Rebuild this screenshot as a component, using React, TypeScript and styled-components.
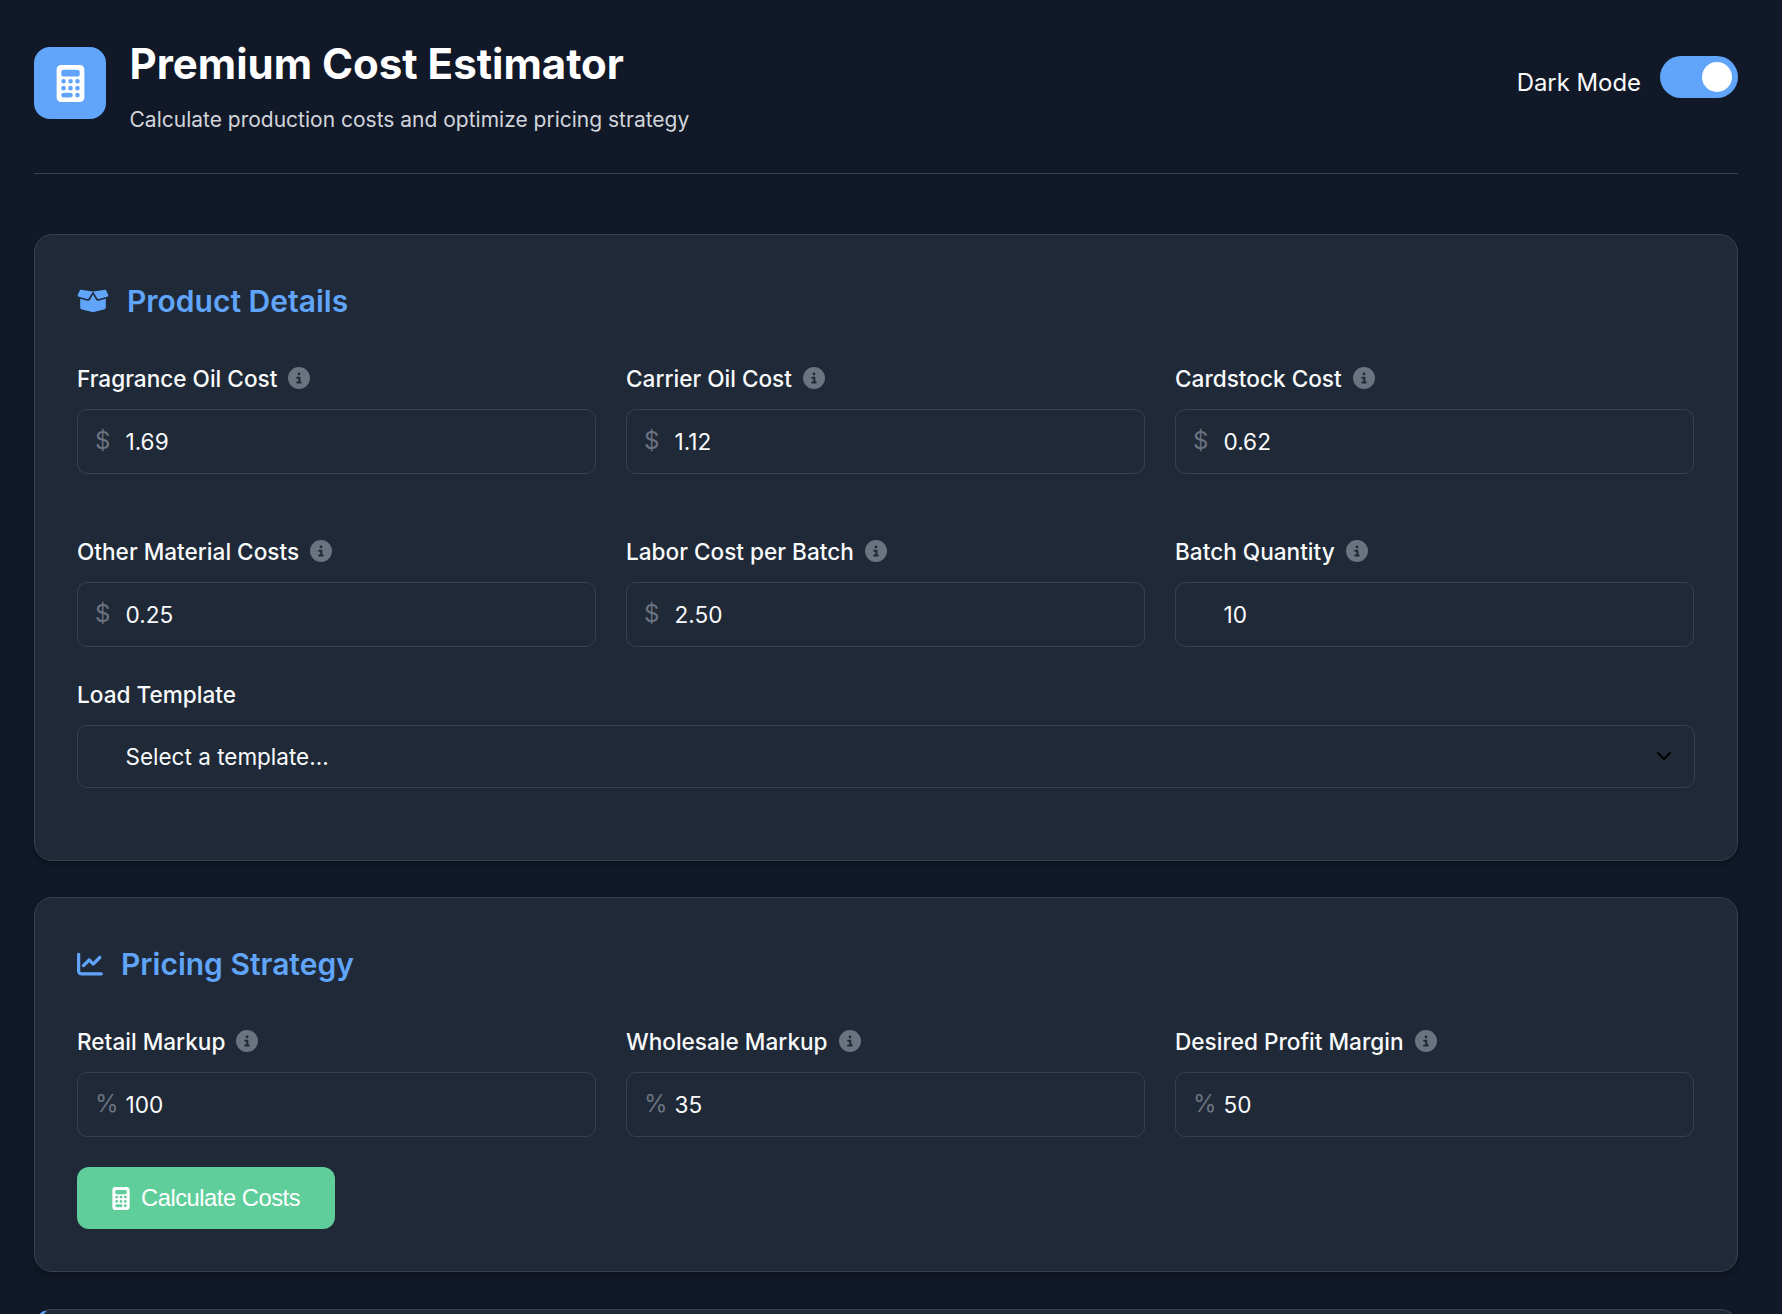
import styled, { createGlobalStyle } from 'styled-components';
import { FaBoxOpen, FaCalculator, FaChartLine, FaCircleInfo } from 'react-icons/fa6';
import { ChevronDown } from 'lucide-react';

const GlobalStyle = createGlobalStyle`
    html, body {
        margin: 0;
        padding: 0;
        background-color: #111827;
    }
    body {
        font-family: 'Inter', 'Liberation Sans', sans-serif;
        color: #f9fafb;
    }
    * {
        box-sizing: border-box;
    }
`;

const Page = styled.div`
    padding: 0 44px 0 34px;
    height: 1314px;
    overflow: hidden;
`;

const Header = styled.header`
    display: flex;
    justify-content: space-between;
    height: 174px;
    padding-top: 36px;
    border-bottom: 1px solid #374151;
    margin-bottom: 60px;
`;

const Brand = styled.div`
    display: flex;
    align-items: flex-start;
    gap: 23.5px;
`;

const LogoTile = styled.div`
    width: 72px;
    height: 72px;
    margin-top: 11px;
    border-radius: 16px;
    background-color: #60a5fa;
    display: flex;
    align-items: center;
    justify-content: center;
    color: #fff;
    font-size: 37px;
`;

const Title = styled.h1`
    margin: 0;
    font-size: 42px;
    line-height: 56px;
    font-weight: 700;
    color: #fff;
`;

const Subtitle = styled.p`
    margin: 14px 0 0;
    font-size: 21px;
    line-height: 28px;
    color: #d1d5db;
`;

const ThemeControl = styled.div`
    display: flex;
    align-items: flex-start;
    gap: 19px;
    padding-top: 20px;
`;

const ThemeLabel = styled.span`
    font-size: 23.9px;
    line-height: 54px;
    color: #f9fafb;
`;

const Switch = styled.div`
    width: 78px;
    height: 42px;
    padding: 6px;
    border-radius: 21px;
    background-color: #60a5fa;
    display: flex;
    justify-content: flex-end;
`;

const Knob = styled.span`
    width: 30px;
    height: 30px;
    border-radius: 50%;
    background-color: #fff;
`;

const Card = styled.section<{ $height: number; $accent?: boolean }>`
    height: ${(p) => p.$height}px;
    margin-bottom: 36.5px;
    padding: 42px;
    background-color: #1f2937;
    border: 1px solid #374151;
    border-left: ${(p) => (p.$accent ? '5px solid #60a5fa' : '1px solid #374151')};
    border-radius: 18px;
    box-shadow:
        0 4px 6px -1px rgba(0, 0, 0, 0.2),
        0 2px 4px -1px rgba(0, 0, 0, 0.14);
`;

const CardTitle = styled.h2<{ $gap: number; $iconSize: number }>`
    display: flex;
    align-items: center;
    gap: ${(p) => p.$gap}px;
    margin: 0 0 38px;
    font-size: 30px;
    line-height: 48px;
    font-weight: 600;
    color: #60a5fa;
    svg {
        font-size: ${(p) => p.$iconSize}px;
    }
`;

const FieldGrid = styled.div`
    display: grid;
    grid-template-columns: repeat(3, 519px);
    column-gap: 30px;
    row-gap: 62px;
`;

const Field = styled.div`
    display: flex;
    flex-direction: column;
`;

const Label = styled.label`
    display: flex;
    align-items: center;
    gap: 11px;
    height: 30px;
    margin-bottom: 16px;
    font-size: 22.6px;
    font-weight: 500;
    color: #f9fafb;
    svg {
        color: #6b7280;
        font-size: 22px;
    }
`;

const InputWrap = styled.div`
    position: relative;
`;

const Prefix = styled.span`
    position: absolute;
    left: 18px;
    top: 18px;
    font-size: 24px;
    line-height: 28px;
    color: #6b7280;
`;

const Input = styled.input`
    width: 100%;
    height: 65px;
    padding: 0 16px 0 47.5px;
    background-color: transparent;
    border: 1px solid #374151;
    border-radius: 10px;
    font-family: 'Inter', sans-serif;
    font-size: 22.6px;
    color: #f9fafb;
    outline: none;
`;

const Select = styled.select`
    width: 100%;
    height: 63px;
    padding: 0 47.5px;
    appearance: none;
    background-color: transparent;
    border: 1px solid #374151;
    border-radius: 10px;
    font-family: 'Inter', sans-serif;
    font-size: 22.5px;
    color: #f9fafb;
    outline: none;
`;

const SelectWrap = styled.div`
    position: relative;
    width: 1618px;
    svg {
        position: absolute;
        right: 19px;
        top: 19px;
        color: #000;
        pointer-events: none;
    }
`;

const TemplateField = styled(Field)`
    margin-top: 32px;
`;

const CalculateButton = styled.button`
    display: flex;
    align-items: center;
    gap: 11px;
    height: 62px;
    margin-top: 30px;
    padding: 0 35px;
    border: none;
    border-radius: 12px;
    background-color: #5fce9b;
    font-family: 'Liberation Sans', Arial, sans-serif;
    font-size: 23.7px;
    letter-spacing: -0.45px;
    color: #fff;
    svg {
        width: 18px;
        height: 23px;
    }
`;

const CostField = ({ label, value, prefix }: { label: string; value: string; prefix?: string }) => (
    <Field>
        <Label>
            {label}
            <FaCircleInfo />
        </Label>
        <InputWrap>
            {prefix && <Prefix>{prefix}</Prefix>}
            <Input defaultValue={value} />
        </InputWrap>
    </Field>
);

export default function App() {
    return (
        <Page>
            <GlobalStyle />
            <Header>
                <Brand>
                    <LogoTile>
                        <FaCalculator />
                    </LogoTile>
                    <div>
                        <Title>Premium Cost Estimator</Title>
                        <Subtitle>Calculate production costs and optimize pricing strategy</Subtitle>
                    </div>
                </Brand>
                <ThemeControl>
                    <ThemeLabel>Dark Mode</ThemeLabel>
                    <Switch>
                        <Knob />
                    </Switch>
                </ThemeControl>
            </Header>

            <Card $height={626.5}>
                <CardTitle $gap={18} $iconSize={32}>
                    <FaBoxOpen />
                    Product Details
                </CardTitle>
                <FieldGrid>
                    <CostField label="Fragrance Oil Cost" value="1.69" prefix="$" />
                    <CostField label="Carrier Oil Cost" value="1.12" prefix="$" />
                    <CostField label="Cardstock Cost" value="0.62" prefix="$" />
                    <CostField label="Other Material Costs" value="0.25" prefix="$" />
                    <CostField label="Labor Cost per Batch" value="2.50" prefix="$" />
                    <CostField label="Batch Quantity" value="10" />
                </FieldGrid>
                <TemplateField>
                    <Label>Load Template</Label>
                    <SelectWrap>
                        <Select defaultValue="">
                            <option value="">Select a template...</option>
                        </Select>
                        <ChevronDown size={24} />
                    </SelectWrap>
                </TemplateField>
            </Card>

            <Card $height={375}>
                <CardTitle $gap={18} $iconSize={26}>
                    <FaChartLine />
                    Pricing Strategy
                </CardTitle>
                <FieldGrid>
                    <CostField label="Retail Markup" value="100" prefix="%" />
                    <CostField label="Wholesale Markup" value="35" prefix="%" />
                    <CostField label="Desired Profit Margin" value="50" prefix="%" />
                </FieldGrid>
                <CalculateButton>
                    <FaCalculator />
                    Calculate Costs
                </CalculateButton>
            </Card>

            <Card $height={200} $accent />
        </Page>
    );
}
